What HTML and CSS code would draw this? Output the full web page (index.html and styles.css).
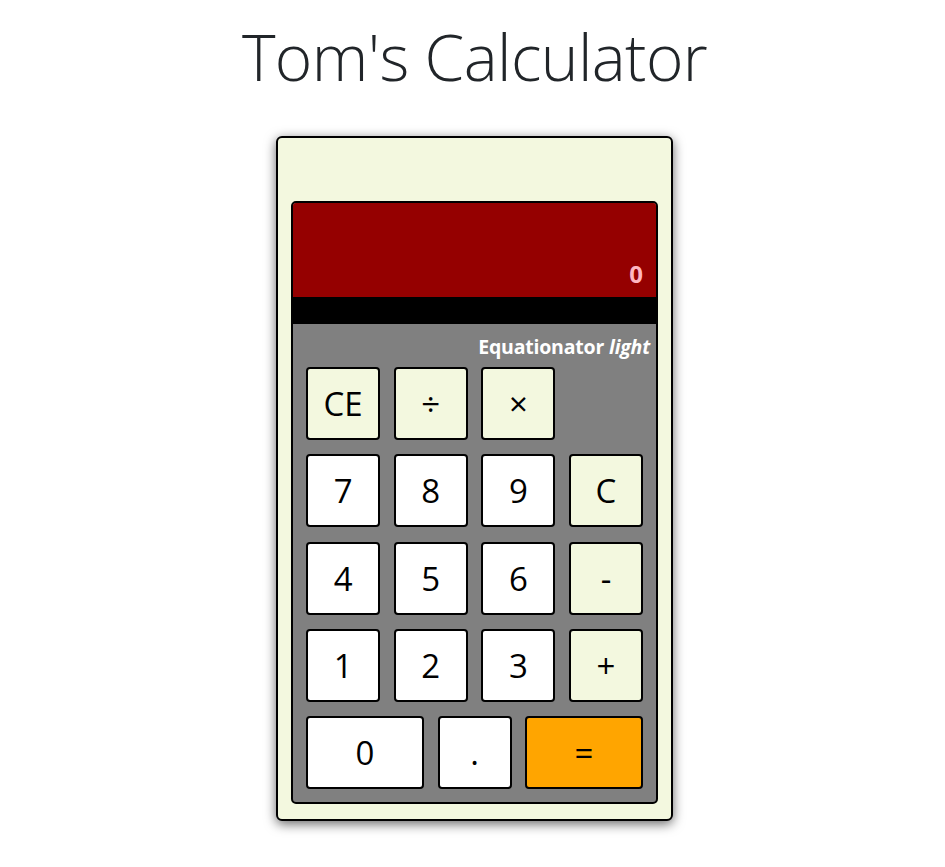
FILE: index.html
```html
<!DOCTYPE html>
<html>
<head>
<meta charset="utf-8">
<title>Tom's Calculator</title>
<link rel="stylesheet" href="styles.css">
</head>
<body>
<div class="page">
  <h1 class="title">Tom's Calculator</h1>
  <div class="calc">
    <div class="panel">
      <div class="display">
        <div class="result">0</div>
        <div class="equation"></div>
      </div>
      <div class="keys-area">
        <div class="brand">Equationator <em>light</em></div>
        <div class="keys">
          <button class="key op">CE</button>
          <button class="key op">÷</button>
          <button class="key op">×</button>
          <span class="blank"></span>
          <button class="key">7</button>
          <button class="key">8</button>
          <button class="key">9</button>
          <button class="key op">C</button>
          <button class="key">4</button>
          <button class="key">5</button>
          <button class="key">6</button>
          <button class="key op">-</button>
          <button class="key">1</button>
          <button class="key">2</button>
          <button class="key">3</button>
          <button class="key op">+</button>
        </div>
        <div class="keys-bottom">
          <button class="key">0</button>
          <button class="key">.</button>
          <button class="key eq">=</button>
        </div>
      </div>
    </div>
  </div>
</div>
</body>
</html>
```

FILE: styles.css
```css
html, body {
  margin: 0;
  padding: 0;
  background: #ffffff;
}

body {
  font-family: "Open Sans", "Liberation Sans", sans-serif;
  color: #212529;
}

*, *::before, *::after {
  box-sizing: border-box;
}

.page {
  display: flex;
  flex-direction: column;
  align-items: center;
  padding-left: 4px;
  padding-bottom: 40px;
}

.title {
  margin: 16px 0 0 0;
  font-weight: 300;
  font-size: 64px;
  line-height: 82px;
  letter-spacing: -0.6px;
  color: #212529;
}

.calc {
  margin-top: 38px;
  width: 397px;
  padding: 63px 13px 15px 13px;
  background: #f3f8df;
  border: 2px solid #000;
  border-radius: 6px;
  box-shadow: 0 3px 12px rgba(0, 0, 0, 0.6);
}

.panel {
  border: 2px solid #000;
  border-radius: 5px;
  overflow: hidden;
  background: #808080;
}

.display {
  display: flex;
  flex-direction: column;
}

.result {
  height: 94px;
  background: #950000;
  color: #ffb6c1;
  font-weight: 700;
  font-size: 24px;
  padding: 0 13px 11px 13px;
  display: flex;
  align-items: flex-end;
  justify-content: flex-end;
  line-height: 1;
}

.equation {
  height: 27px;
  background: #000;
}

.keys-area {
  padding: 0 13px 13px 13px;
}

.brand {
  height: 43px;
  margin-right: -13px;
  display: flex;
  align-items: center;
  justify-content: flex-end;
  padding-top: 1px;
  color: #fff;
  font-weight: 700;
  font-size: 19.5px;
  letter-spacing: -0.2px;
}

.brand em {
  font-style: italic;
  margin-left: 5px;
  padding-right: 6px;
}

.keys {
  display: grid;
  grid-template-columns: repeat(4, 1fr);
  column-gap: 13.5px;
  row-gap: 14.3px;
}

.keys-bottom {
  display: grid;
  grid-template-columns: 118px 1fr 118px;
  column-gap: 13.5px;
  margin-top: 14.3px;
}

.key {
  height: 73px;
  margin: 0;
  padding: 0;
  border: 2px solid #000;
  border-radius: 4px;
  background: #ffffff;
  color: #000;
  font-family: "Open Sans", "Liberation Sans", sans-serif;
  font-size: 33px;
  font-weight: 400;
  line-height: 1;
  display: flex;
  align-items: center;
  justify-content: center;
}

.key.op {
  background: #f3f8df;
}

.key.eq {
  background: #ffa500;
}
```
